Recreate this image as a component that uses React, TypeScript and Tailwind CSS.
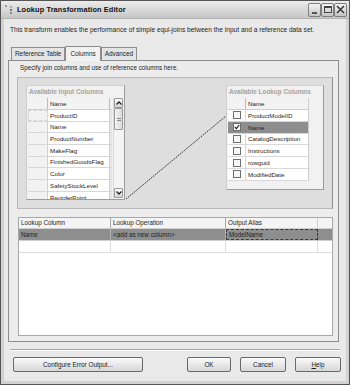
import React from 'react';

const inputCols = ['ProductID', 'Name', 'ProductNumber', 'MakeFlag', 'FinishedGoodsFlag', 'Color', 'SafetyStockLevel', 'ReorderPoint'];

const lookupCols = [
    { name: 'ProductModelID', checked: false },
    { name: 'Name', checked: true },
    { name: 'CatalogDescription', checked: false },
    { name: 'Instructions', checked: false },
    { name: 'rowguid', checked: false },
    { name: 'ModifiedDate', checked: false },
];

function TitleButton({ kind }: { kind: 'min' | 'max' | 'close' }) {
    return (
        <div className="w-[13px] h-[14px] border border-[#7d7d7d] rounded-[2px] bg-gradient-to-b from-[#f4f4f4] to-[#c4c4c4] flex items-center justify-center">
            {kind === 'min' && <div className="w-[5px] h-[2px] bg-[#555] mt-[6px]" />}
            {kind === 'max' && <div className="w-[8px] h-[7px] border border-[#444] border-t-2" />}
            {kind === 'close' && (
                <svg width="9" height="9" viewBox="0 0 9 9">
                    <path d="M1 1 L8 8 M8 1 L1 8" stroke="#3a3a3a" strokeWidth="1.6" />
                </svg>
            )}
        </div>
    );
}

function Checkbox({ checked }: { checked: boolean }) {
    return (
        <div className="w-[8px] h-[8px] border border-[#6f6f6f] bg-[#f7f7f7] flex items-center justify-center">
            {checked && (
                <svg width="6" height="6" viewBox="0 0 6 6">
                    <path d="M0.8 3 L2.4 4.6 L5.2 1.2" stroke="#222" strokeWidth="1.1" fill="none" />
                </svg>
            )}
        </div>
    );
}

function Btn({ label, width, hotkey }: { label: string; width: string; hotkey?: boolean }) {
    return (
        <div className={`${width} h-[15px] border border-[#6a6a6a] rounded-[2px] bg-gradient-to-b from-[#fbfbfb] to-[#d6d6d6] flex items-center justify-center text-[6.4px] text-[#222]`}>
            {hotkey ? (
                <span><span className="underline">H</span>elp</span>
            ) : (
                label
            )}
        </div>
    );
}

export default function App() {
    return (
        <div className="w-[350px] h-[385px] bg-[#e9e9e9] border border-[#555] flex flex-col font-['Liberation_Sans',Arial,sans-serif] text-[#1e1e1e] overflow-hidden">
            {/* Title bar */}
            <div className="h-[18px] shrink-0 bg-gradient-to-b from-[#ececec] to-[#c6c6c6] flex items-center pl-[3px] pr-[2px] border-b border-[#b5b5b5]">
                <svg width="10" height="12" viewBox="0 0 10 12" className="mr-[3px]">
                    <rect x="1" y="1" width="2" height="2" fill="#999" />
                    <rect x="6" y="2" width="2" height="2" fill="#aaa" />
                    <rect x="6" y="5" width="2" height="2" fill="#777" />
                    <rect x="6" y="8" width="2" height="2" fill="#888" />
                </svg>
                <span className="text-[7.4px] font-bold tracking-[0.1px] text-[#111]">Lookup Transformation Editor</span>
                <div className="ml-auto flex gap-0">
                    <TitleButton kind="min" />
                    <TitleButton kind="max" />
                    <TitleButton kind="close" />
                </div>
            </div>

            {/* Body */}
            <div className="flex-1 flex flex-col border-x-[3px] border-b-[3px] border-[#d2d2d2]">
                <div className="pl-[6px] pt-[6px] h-[26px] text-[6.6px] leading-[9px] whitespace-nowrap">
                    This transform enables the performance of simple equi-joins between the input and a reference data set.
                </div>

                {/* Tabs */}
                <div className="h-[15px] flex items-end pl-[7px]">
                    <div className="h-[13px] px-[3px] flex items-center border border-b-0 border-[#8d8d8d] bg-[#e4e4e4] text-[6.4px]">Reference Table</div>
                    <div className="h-[15px] px-[4px] flex items-start pt-[2px] border border-b-0 border-[#8d8d8d] bg-[#f1f1f1] text-[6.4px] -mb-px relative z-10">Columns</div>
                    <div className="h-[13px] px-[3px] flex items-center border border-b-0 border-[#8d8d8d] bg-[#e4e4e4] text-[6.4px]">Advanced</div>
                </div>

                {/* Tab page */}
                <div className="ml-[4px] mr-[7px] h-[282px] border border-[#8d8d8d] bg-[#ececec] flex flex-col">
                    <div className="pl-[11px] pt-[2px] h-[16px] text-[6.3px] leading-[9px]">Specify join columns and use of reference columns here.</div>

                    {/* Mapping panel */}
                    <div className="relative ml-[8px] mr-[5px] h-[132px] border border-[#b9b9b9] border-r-[#8f8f8f] bg-[#dedede] flex justify-between items-start px-[8px] pt-[7px]">
                        {/* Input columns */}
                        <div className="w-[99px] h-[115px] border border-[#cfcfcf] border-r-[#9c9c9c] border-b-[#9c9c9c] bg-[#f1f1f1] px-[1px] flex flex-col">
                            <div className="h-[12px] pl-[1px] flex items-center text-[6.4px] font-bold text-[#a3a3a3]">Available Input Columns</div>
                            <div className="flex flex-1 overflow-hidden">
                                <div className="w-[85px] bg-[#e6e6e6] overflow-hidden">
                                    <div className="flex h-[12px] bg-[#f3f3f3] border-b border-[#cfcfcf]">
                                        <div className="w-[20px] border-r border-[#bdbdbd]" />
                                        <div className="w-[62px] pl-[2px] flex items-center text-[6.2px] border-r border-[#bdbdbd]">Name</div>
                                    </div>
                                    {inputCols.map((c, i) => (
                                        <div key={c} className="flex h-[11.7px] border-b border-[#d8d8d8]">
                                            <div className={`w-[20px] bg-[#f2f2f2] border-r border-[#d0d0d0] ${i === 0 ? 'border border-dashed border-[#555]' : ''}`} />
                                            <div className="w-[62px] pl-[2px] bg-white flex items-center text-[6.2px] border-r border-[#d0d0d0] whitespace-nowrap overflow-hidden">{c}</div>
                                        </div>
                                    ))}
                                </div>
                                <div className="w-[10px] ml-[1px] bg-[#f4f4f4] border-l border-[#dadada] flex flex-col">
                                    <div className="h-[10px] border border-[#9a9a9a] rounded-[1px] bg-gradient-to-b from-white to-[#d5d5d5] flex items-center justify-center">
                                        <svg width="6" height="4" viewBox="0 0 6 4"><path d="M0.5 3.5 L3 1 L5.5 3.5" stroke="#222" strokeWidth="1.3" fill="none" /></svg>
                                    </div>
                                    <div className="h-[22px] border border-[#9a9a9a] rounded-[1px] bg-gradient-to-r from-[#f6f6f6] to-[#d9d9d9] flex items-center justify-center">
                                        <div className="w-[4px] h-[3px] border-y border-[#8a8a8a]" />
                                    </div>
                                    <div className="flex-1" />
                                    <div className="h-[10px] border border-[#9a9a9a] rounded-[1px] bg-gradient-to-b from-white to-[#d5d5d5] flex items-center justify-center mb-[1px]">
                                        <svg width="6" height="4" viewBox="0 0 6 4"><path d="M0.5 0.5 L3 3 L5.5 0.5" stroke="#222" strokeWidth="1.3" fill="none" /></svg>
                                    </div>
                                </div>
                            </div>
                        </div>

                        {/* Lookup columns */}
                        <div className="w-[98px] h-[105px] border border-[#cfcfcf] border-r-[#9c9c9c] border-b-[#9c9c9c] bg-[#f1f1f1] px-[1px] flex flex-col">
                            <div className="h-[12px] pl-[1px] flex items-center text-[6.4px] font-bold text-[#a3a3a3] whitespace-nowrap">Available Lookup Columns</div>
                            <div className="w-[81px] bg-white border-r border-[#cfcfcf]">
                                <div className="flex h-[12px] bg-[#f3f3f3] border-b border-[#cfcfcf]">
                                    <div className="w-[18px] border-r border-[#bdbdbd]" />
                                    <div className="flex-1 pl-[2px] flex items-center text-[6.2px]">Name</div>
                                </div>
                                {lookupCols.map((c) => (
                                    <div key={c.name} className={`flex h-[11.8px] border-b border-[#d8d8d8] ${c.checked ? 'bg-[#8e8e8e]' : ''}`}>
                                        <div className={`w-[18px] flex items-center justify-center border-r ${c.checked ? 'border-[#8e8e8e]' : 'border-[#d8d8d8]'}`}>
                                            <Checkbox checked={c.checked} />
                                        </div>
                                        <div className="flex-1 pl-[2px] flex items-center text-[6.2px] whitespace-nowrap">{c.name}</div>
                                    </div>
                                ))}
                            </div>
                        </div>

                        {/* Connector */}
                        <svg className="absolute inset-0 pointer-events-none" width="315" height="132">
                            <line x1="108" y1="121" x2="208" y2="38" stroke="#111" strokeWidth="0.9" strokeDasharray="1.5 1" />
                        </svg>
                    </div>

                    {/* Lookup grid */}
                    <div className="ml-[9px] mr-[5px] mt-[8px] h-[119px] bg-white border border-[#a9a9a9] flex flex-col text-[6.3px]">
                        <div className="flex h-[11px] bg-[#f4f4f4] border-b border-[#cfcfcf]">
                            <div className="w-[92px] pl-[2px] flex items-center border-r border-[#a9a9a9]">Lookup Column</div>
                            <div className="w-[115px] pl-[2px] flex items-center border-r border-[#a9a9a9]">Lookup Operation</div>
                            <div className="w-[92px] pl-[2px] flex items-center border-r border-[#cfcfcf]">Output Alias</div>
                        </div>
                        <div className="flex h-[12px] bg-[#8e8e8e] border-b border-[#cfcfcf]">
                            <div className="w-[92px] pl-[2px] flex items-center border-r border-[#b0b0b0]">Name</div>
                            <div className="w-[115px] pl-[2px] flex items-center border-r border-[#b0b0b0]">&lt;add as new column&gt;</div>
                            <div className="w-[92px] pl-[2px] flex items-center border border-dashed border-[#3a3a3a]">ModelName</div>
                        </div>
                        <div className="flex h-[12px] border-b border-[#dcdcdc]">
                            <div className="w-[92px] border-r border-[#dcdcdc]" />
                            <div className="w-[115px] border-r border-[#dcdcdc]" />
                            <div className="w-[92px] border-r border-[#dcdcdc]" />
                        </div>
                    </div>
                </div>

                {/* Separator */}
                <div className="mx-[6px] mt-[7px] h-[2px] border-t border-[#a6a6a6] border-b border-b-white" />

                {/* Buttons */}
                <div className="flex items-center mt-[6px] pl-[9px] pr-[5px]">
                    <Btn label="Configure Error Output..." width="w-[130px]" />
                    <div className="ml-auto flex gap-[9px]">
                        <Btn label="OK" width="w-[44px]" />
                        <Btn label="Cancel" width="w-[46px]" />
                        <Btn label="Help" width="w-[46px]" hotkey />
                    </div>
                </div>
            </div>
        </div>
    );
}
